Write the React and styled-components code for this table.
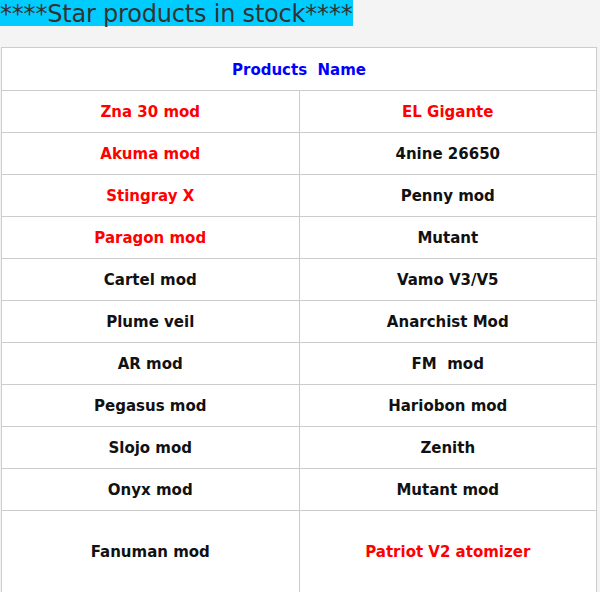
import React from 'react';
import styled, { createGlobalStyle } from 'styled-components';

const GlobalStyle = createGlobalStyle`
  body {
    margin: 0;
    background: #f4f4f4;
    font-family: "Comic Sans MS", "DejaVu Sans", sans-serif;
  }
`;

const Page = styled.div`
  width: 600px;
  height: 592px;
  overflow: hidden;
`;

const Heading = styled.h2`
  display: inline-block;
  margin: 0;
  padding: 2px 0 0;
  height: 24px;
  background: #00ccff;
  color: #333333;
  font-size: 24px;
  font-weight: normal;
  line-height: 24px;
  letter-spacing: -0.2px;
  white-space: nowrap;
`;

const Table = styled.table`
  margin: 21px 0 0 1px;
  width: 596px;
  border-collapse: collapse;
  background: #ffffff;
  border: 1px solid #cccccc;
`;

const Cell = styled.td`
  width: 50%;
  height: ${({ tall }) => (tall ? '82px' : '41px')};
  padding: 0;
  border: 1px solid #cccccc;
  text-align: center;
  vertical-align: middle;
  font-size: 15px;
  font-weight: bold;
  color: ${({ tone }) => (tone === 'red' ? '#ff0000' : '#111111')};
`;

const HeadCell = styled.td`
  height: 40px;
  padding: 2px 0 0;
  border: 1px solid #cccccc;
  text-align: center;
  font-size: 15px;
  font-weight: bold;
  color: #0000ff;
  white-space: pre;
`;

const Label = styled.span`
  white-space: pre;
`;

const rows = [
  [['Zna 30 mod', 'red'], ['EL Gigante', 'red']],
  [['Akuma mod', 'red'], ['4nine 26650']],
  [['Stingray X', 'red'], ['Penny mod']],
  [['Paragon mod', 'red'], ['Mutant']],
  [['Cartel mod'], ['Vamo V3/V5']],
  [['Plume veil'], ['Anarchist Mod']],
  [['AR mod'], ['FM  mod']],
  [['Pegasus mod'], ['Hariobon mod']],
  [['Slojo mod'], ['Zenith']],
  [['Onyx mod'], ['Mutant mod']],
  [['Fanuman mod'], ['Patriot V2 atomizer', 'red']],
];

const App = () => (
  <Page>
    <GlobalStyle />
    <Heading>****Star products in stock****</Heading>
    <Table>
      <tbody>
        <tr>
          <HeadCell colSpan={2}>Products  Name</HeadCell>
        </tr>
        {rows.map((row, i) => (
          <tr key={row[0][0]}>
            {row.map(([text, tone]) => (
              <Cell key={text} tone={tone} tall={i === rows.length - 1}>
                <Label>{text}</Label>
              </Cell>
            ))}
          </tr>
        ))}
      </tbody>
    </Table>
  </Page>
);

export default App;
